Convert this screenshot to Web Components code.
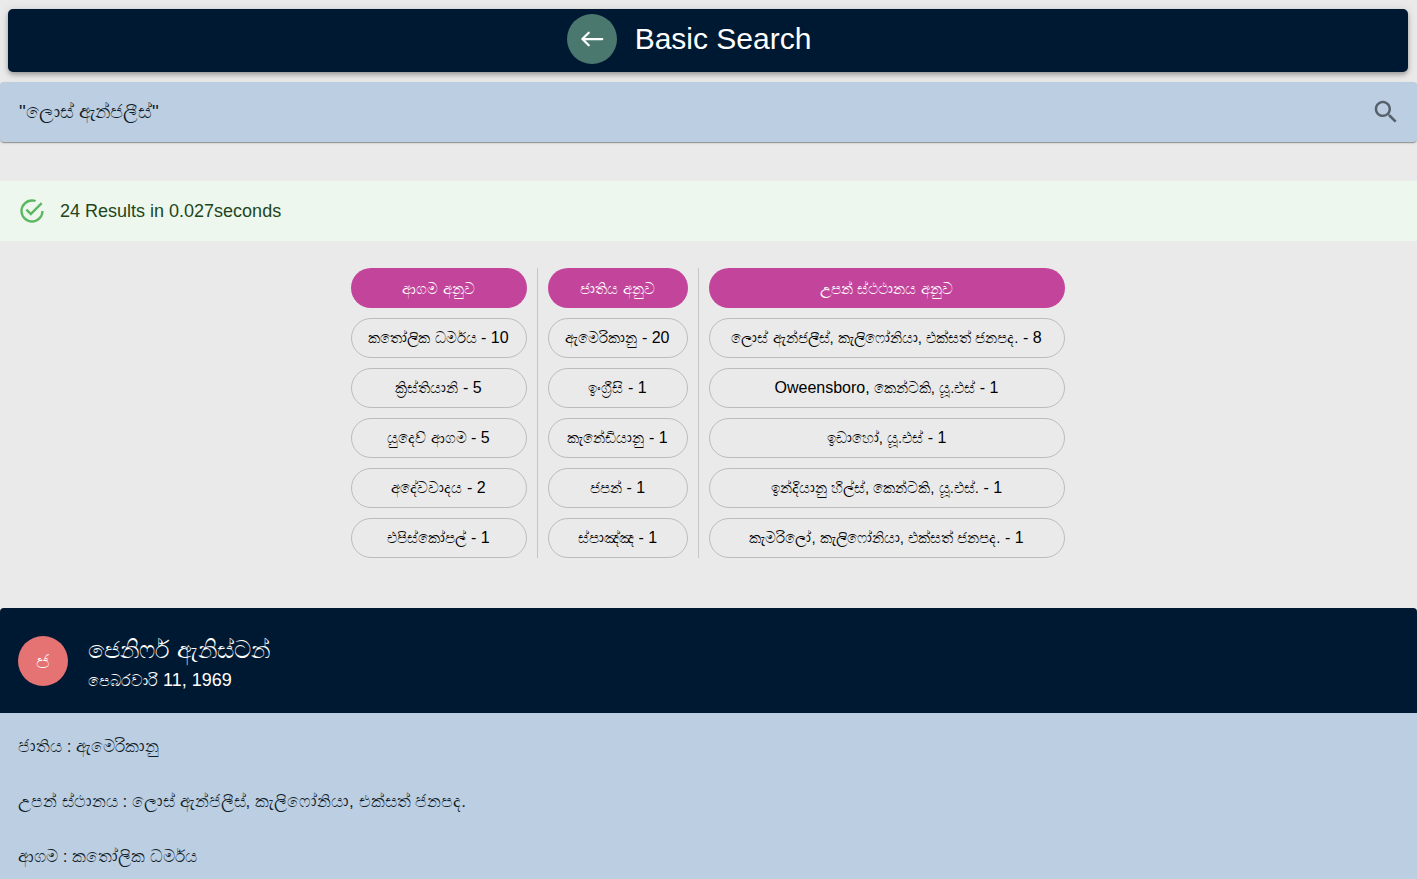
<!DOCTYPE html>
<html lang="si">
<head>
<meta charset="utf-8">
<meta name="viewport" content="width=device-width, initial-scale=1">
<title>Basic Search</title>
<style>
  body { margin: 0; background: #eaeaea; color: #000; font: 16px/24px "Liberation Sans", "Noto Sans", sans-serif; }
</style>
</head>
<body>
<search-page></search-page>

<script>
const attach = (el, html) => { el.attachShadow({ mode: "open" }).innerHTML = html; };

customElements.define("app-header", class extends HTMLElement {
  constructor() {
    super();
    attach(this, `
      <style>
        :host { display: block; margin: 9px 9px 10px 8px; }
        header { box-sizing: border-box; height: 63px; padding: 0 48px 4px 10px; display: flex; align-items: center; justify-content: center; gap: 18px;
          background: #001932; color: #fff; border-radius: 5px;
          box-shadow: 0 2px 4px -1px rgba(0,0,0,.2), 0 4px 5px rgba(0,0,0,.14), 0 1px 10px rgba(0,0,0,.12); }
        button { width: 50px; height: 50px; padding: 0; border: 0; border-radius: 50%; background: #4a786f; display: grid; place-items: center; cursor: pointer; }
        svg { width: 30px; height: 30px; fill: none; stroke: #fff; stroke-width: 1.8; stroke-linecap: round; stroke-linejoin: round; }
        h1 { margin: 0; font-size: 30px; line-height: 36px; font-weight: 400; }
      </style>
      <header>
        <button type="button" aria-label="Back"><svg viewBox="0 0 24 24"><path d="M20.2 12H4.3M9.4 7 4.3 12l5.1 5"/></svg></button>
        <h1><slot></slot></h1>
      </header>`);
  }
});

customElements.define("search-field", class extends HTMLElement {
  constructor() {
    super();
    attach(this, `
      <style>
        :host { display: block; margin-bottom: 39px; }
        form { box-sizing: border-box; height: 60px; padding: 0 16px 0 19px; display: flex; align-items: center; background: #bccee2; border-radius: 4px;
          box-shadow: 0 2px 1px -1px rgba(0,0,0,.2), 0 1px 1px rgba(0,0,0,.14), 0 1px 3px rgba(0,0,0,.12); }
        input { flex: 1; min-width: 0; height: 40px; padding: 0; border: 0; outline: 0; background: none; color: #101c28; font: inherit; font-size: 19px; }
        button { width: 30px; height: 30px; padding: 0; border: 0; background: none; cursor: pointer; }
        svg { display: block; width: 30px; height: 30px; fill: #56616b; }
      </style>
      <form role="search">
        <input type="text" aria-label="Search">
        <button type="button" aria-label="Search"><svg viewBox="0 0 24 24"><path d="M15.5 14h-.79l-.28-.27C15.41 12.59 16 11.11 16 9.5 16 5.91 13.09 3 9.5 3S3 5.91 3 9.5 5.91 16 9.5 16c1.61 0 3.09-.59 4.23-1.57l.27.28v.79l5 4.99L20.49 19l-4.99-5zm-6 0C7.01 14 5 11.99 5 9.5S7.01 5 9.5 5 14 7.01 14 9.5 11.99 14 9.5 14z"/></svg></button>
      </form>`);
    this.shadowRoot.querySelector("input").value = this.getAttribute("value");
  }
});

customElements.define("result-alert", class extends HTMLElement {
  constructor() {
    super();
    attach(this, `
      <style>
        :host { box-sizing: border-box; height: 60px; padding: 0 18px; display: flex; align-items: center; gap: 14px;
          background: #edf7ed; color: #1e4620; font-size: 18px; }
        svg { width: 28px; height: 28px; fill: #5db761; }
      </style>
      <svg viewBox="0 0 24 24" aria-hidden="true"><path d="M20 12A8 8 0 0 1 12 20 8 8 0 0 1 4 12 8 8 0 0 1 12 4C12.76 4 13.5 4.11 14.2 4.31L15.77 2.74A10 10 0 0 0 12 2 10 10 0 0 0 2 12 10 10 0 0 0 12 22 10 10 0 0 0 22 12M7.91 10.08 6.5 11.5 11 16 21 6 19.59 4.58 11 13.17 7.91 10.08Z"/></svg>
      <span role="status"><slot></slot></span>`);
  }
});

customElements.define("facet-chip", class extends HTMLElement {
  constructor() {
    super();
    attach(this, `
      <style>
        :host { display: block; }
        button { box-sizing: border-box; width: 100%; height: 40px; padding: 0 8px; border: 1px solid #bbbcbd; border-radius: 20px;
          background: none; color: #000; font: inherit; font-size: 16px; white-space: nowrap; cursor: pointer; }
        .label { font-size: 15px; }
      </style>
      <button type="button"><span class="label"><slot></slot></span><span class="count"></span></button>`);
    this.shadowRoot.querySelector(".count").textContent = " - " + this.getAttribute("count");
  }
});

customElements.define("facet-column", class extends HTMLElement {
  constructor() {
    super();
    attach(this, `
      <style>
        :host { display: flex; flex-direction: column; gap: 10px; padding: 0 10px; border-right: 1px solid #c6c6c6; }
        :host(:last-of-type) { border-right: 0; }
        h2 { margin: 0; height: 40px; border-radius: 20px; background: #c2449b; color: #fff; font-size: 15px; line-height: 42px; font-weight: 400; text-align: center; white-space: nowrap; }
      </style>
      <h2></h2>
      <slot></slot>`);
    this.shadowRoot.querySelector("h2").textContent = this.getAttribute("heading");
  }
});

customElements.define("person-card", class extends HTMLElement {
  constructor() {
    super();
    attach(this, `
      <style>
        :host { display: flex; flex-direction: column; border-radius: 4px 4px 0 0; overflow: hidden; background: #bccee2; }
        header { box-sizing: border-box; height: 105px; padding: 0 18px; display: flex; align-items: center; gap: 20px; background: #001932; color: #fff; }
        .avatar { width: 50px; height: 50px; border-radius: 50%; background: #e57373; display: grid; place-items: center; font-size: 20px; }
        .title { padding-top: 8px; }
        h2 { margin: 0; font-size: 24px; line-height: 32px; font-weight: 400; }
        p { margin: 0; font-size: 18px; line-height: 28px; }
        section { display: flex; flex-direction: column; gap: 31px; padding: 22px 18px 10px; color: #101c28; font-size: 17px; }
      </style>
      <header>
        <div class="avatar"><slot name="initial"></slot></div>
        <div class="title"><h2><slot name="name"></slot></h2><p><slot name="born"></slot></p></div>
      </header>
      <section><slot></slot></section>`);
  }
});

customElements.define("search-page", class extends HTMLElement {
  constructor() {
    super();
    attach(this, `
      <style>
        :host { display: flex; flex-direction: column; min-height: 100vh; overflow: hidden; }
        .facets { display: grid; grid-template-columns: minmax(197px, auto) minmax(161px, auto) minmax(376px, auto); justify-content: center; margin: 27px 0 50px; padding-right: 2px; }
        .latin { font-size: 16px; }
        .month { font-size: 16px; }
        person-card { flex: 1; }
      </style>
      <app-header>Basic Search</app-header>
      <main>
        <search-field value='"ලොස් ඇන්ජලීස්"'></search-field>
        <result-alert>24 Results in 0.027seconds</result-alert>
        <div class="facets">
          <facet-column heading="ආගම අනුව">
            <facet-chip count="10">කතෝලික ධර්මය</facet-chip>
            <facet-chip count="5">ක්‍රිස්තියානි</facet-chip>
            <facet-chip count="5">යුදෙව් ආගම</facet-chip>
            <facet-chip count="2">අදේවවාදය</facet-chip>
            <facet-chip count="1">එපිස්කෝපල්</facet-chip>
          </facet-column>
          <facet-column heading="ජාතිය අනුව">
            <facet-chip count="20">ඇමෙරිකානු</facet-chip>
            <facet-chip count="1">ඉංග්‍රීසි</facet-chip>
            <facet-chip count="1">කැනේඩියානු</facet-chip>
            <facet-chip count="1">ජපන්</facet-chip>
            <facet-chip count="1">ස්පාඤ්ඤ</facet-chip>
          </facet-column>
          <facet-column heading="උපන් ස්ථථානය අනුව">
            <facet-chip count="8">ලොස් ඇන්ජලීස්, කැලිෆෝනියා, එක්සත් ජනපද.</facet-chip>
            <facet-chip count="1"><span class="latin">Oweensboro,</span> කෙන්ටකි, යූ.එස්</facet-chip>
            <facet-chip count="1">ඉඩාහෝ, යූ.එස්</facet-chip>
            <facet-chip count="1">ඉන්දියානු හිල්ස්, කෙන්ටකි, යූ.එස්.</facet-chip>
            <facet-chip count="1">කැමරිලෝ, කැලිෆෝනියා, එක්සත් ජනපද.</facet-chip>
          </facet-column>
        </div>
      </main>
      <person-card>
        <span slot="initial">ජ</span>
        <span slot="name">ජෙනිෆර් ඇනිස්ටන්</span>
        <span slot="born"><span class="month">පෙබරවාරි</span> 11, 1969</span>
        <div>ජාතිය : ඇමෙරිකානු</div>
        <div>උපන් ස්ථානය : ලොස් ඇන්ජලීස්, කැලිෆෝනියා, එක්සත් ජනපද.</div>
        <div>ආගම : කතෝලික ධර්මය</div>
      </person-card>`);
  }
});
</script>
</body>
</html>
